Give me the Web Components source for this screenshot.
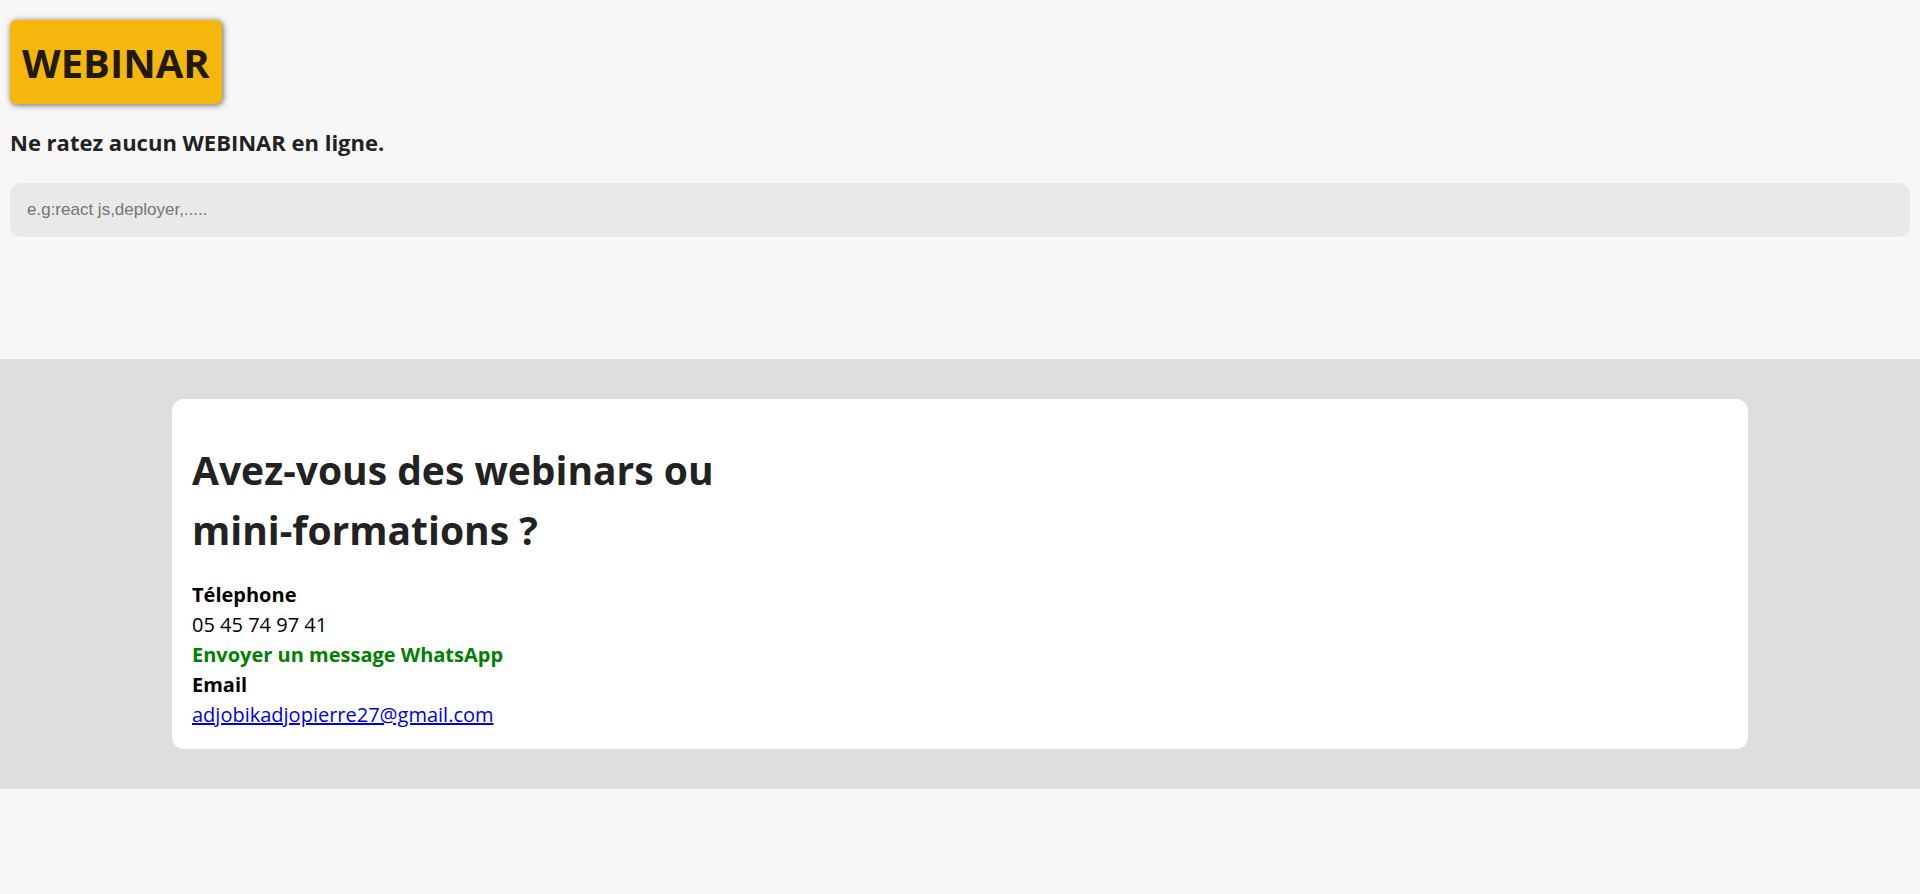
<!DOCTYPE html>
<html lang="fr">
<head>
<meta charset="utf-8">
<meta name="viewport" content="width=device-width, initial-scale=1">
<title>Webinar</title>
<style>
  body { margin: 0; background: #f7f7f7; color: #000; font-family: "Open Sans", "Noto Sans", sans-serif; }
</style>
</head>
<body>
<webinar-app></webinar-app>

<template id="app-template">
  <style>
    :host { display: block; }
    header { padding: 20px 10px 0; }
    h2 { margin: 21px 0 23px; font-size: 22px; line-height: 35px; font-weight: 700; color: #222; }
    main { min-height: 122px; }
  </style>
  <header>
    <webinar-badge>WEBINAR</webinar-badge>
    <h2>Ne ratez aucun WEBINAR en ligne.</h2>
    <search-field placeholder="e.g:react js,deployer,....."></search-field>
  </header>
  <main></main>
  <contact-section>
    <span slot="title">Avez-vous des webinars ou mini-formations ?</span>
    <contact-entry label="Télephone">05 45 74 97 41</contact-entry>
    <whatsapp-link href="https://wa.me/0545749741">Envoyer un message WhatsApp</whatsapp-link>
    <contact-entry label="Email"><a href="mailto:adjobikadjopierre27@gmail.com">adjobikadjopierre27@gmail.com</a></contact-entry>
  </contact-section>
</template>

<template id="badge-template">
  <style>
    :host { display: block; width: fit-content; padding: 13px 12px 11px; border-radius: 6px; background: #f5b70c; box-shadow: 1px 1px 6px rgba(0, 0, 0, .6); }
    h1 { margin: 0; font-size: 40px; line-height: 60px; font-weight: 700; color: #221a00; }
  </style>
  <h1><slot></slot></h1>
</template>

<template id="search-template">
  <style>
    :host { display: block; }
    input { display: block; box-sizing: border-box; width: 100%; height: 54px; padding: 0 17px; border: 0; border-radius: 12px; outline: 0; background: #e9e9e9; font: 17px "Liberation Sans", Arial, sans-serif; }
    input::placeholder { color: #757575; opacity: 1; }
  </style>
  <input type="search">
</template>

<template id="contact-template">
  <style>
    :host { display: block; padding: 40px 0; background: #dedede; }
    article { width: 80%; margin: 0 auto; padding: 21px 20px 19px; border-radius: 12px; background: #fff; font-size: 20px; line-height: 30px; }
    h1 { max-width: 600px; margin: 20px 0; font-size: 39px; line-height: 60px; font-weight: 700; color: #222; }
  </style>
  <article>
    <h1><slot name="title"></slot></h1>
    <slot></slot>
  </article>
</template>

<template id="entry-template">
  <style>
    :host { display: block; }
    strong, span { display: block; }
    ::slotted(a) { color: #0000ee; }
  </style>
  <strong></strong>
  <span><slot></slot></span>
</template>

<template id="whatsapp-template">
  <style>
    :host { display: block; }
    a { color: #008000; font-weight: 700; text-decoration: none; }
  </style>
  <a><slot></slot></a>
</template>

<script>
  class BaseElement extends HTMLElement {
    constructor(id) {
      super();
      this.attachShadow({ mode: "open" }).append(document.getElementById(id).content.cloneNode(true));
    }
  }
  customElements.define("webinar-badge", class extends BaseElement {
    constructor() { super("badge-template"); }
  });
  customElements.define("search-field", class extends BaseElement {
    constructor() { super("search-template"); }
    connectedCallback() {
      const input = this.shadowRoot.querySelector("input");
      input.placeholder = this.getAttribute("placeholder") || "";
      input.setAttribute("aria-label", "Rechercher un webinar");
    }
  });
  customElements.define("contact-section", class extends BaseElement {
    constructor() { super("contact-template"); }
  });
  customElements.define("contact-entry", class extends BaseElement {
    constructor() { super("entry-template"); }
    connectedCallback() {
      this.shadowRoot.querySelector("strong").textContent = this.getAttribute("label");
    }
  });
  customElements.define("whatsapp-link", class extends BaseElement {
    constructor() { super("whatsapp-template"); }
    connectedCallback() {
      this.shadowRoot.querySelector("a").href = this.getAttribute("href");
    }
  });
  customElements.define("webinar-app", class extends BaseElement {
    constructor() { super("app-template"); }
  });
</script>
</body>
</html>
